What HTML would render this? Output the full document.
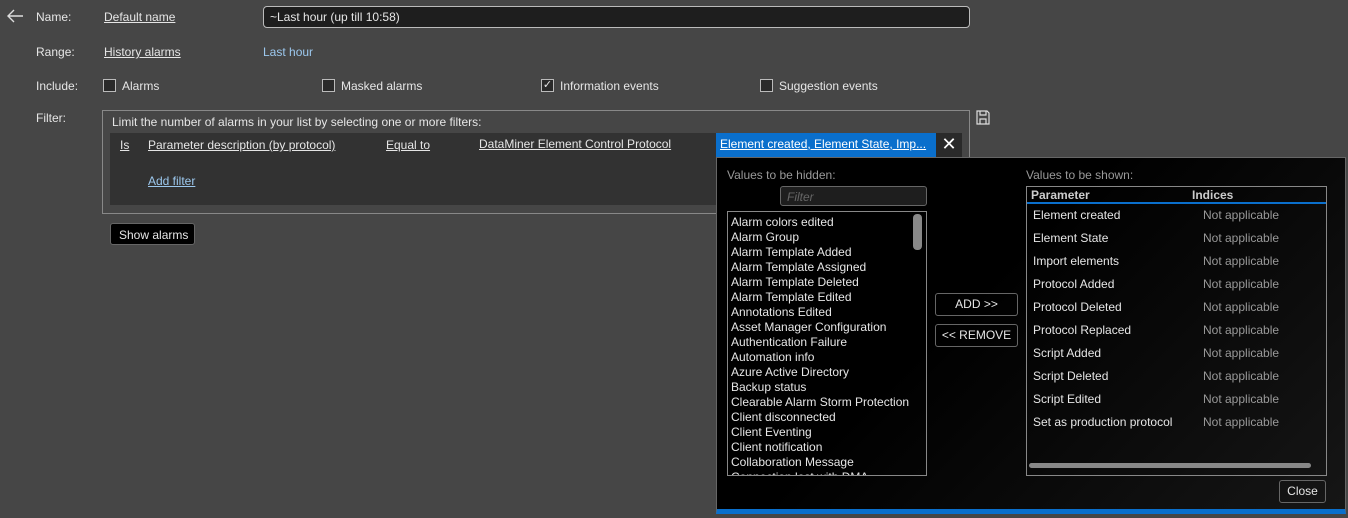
<!DOCTYPE html>
<html><head><style>
*{box-sizing:border-box;margin:0;padding:0}
body{width:1348px;height:518px;background:#464646;font-family:"Liberation Sans",sans-serif;font-size:12px;color:#e6e6e6;position:relative;overflow:hidden}
.a{position:absolute;white-space:nowrap}
.u{text-decoration:underline}
.cb{position:absolute;width:13px;height:13px;border:1px solid #bbb;background:#2a2a2a}
.lst div{height:15px;line-height:15px;padding-left:3px}
</style></head><body>
<svg class="a" style="left:6px;top:9px" width="18" height="14"><path d="M17 7H2M8 1L2 7l6 6" stroke="#ddd" stroke-width="1.4" fill="none"/></svg>
<div class="a" style="left:36px;top:10px">Name:</div>
<div class="a u" style="left:104px;top:10px">Default name</div>
<div class="a" style="left:263px;top:6px;width:707px;height:22px;border:1px solid #bbb;border-radius:4px;background:#1e1e1e;padding:3px 6px">~Last hour (up till 10:58)</div>
<div class="a" style="left:36px;top:45px">Range:</div>
<div class="a u" style="left:104px;top:45px">History alarms</div>
<div class="a" style="left:263px;top:45px;color:#9cc8ee">Last hour</div>
<div class="a" style="left:36px;top:79px">Include:</div>
<div class="cb" style="left:103px;top:79px"></div><div class="a" style="left:122px;top:79px">Alarms</div>
<div class="cb" style="left:322px;top:79px"></div><div class="a" style="left:341px;top:79px">Masked alarms</div>
<div class="cb" style="left:541px;top:79px;font-size:11px;line-height:11px;text-align:center">✓</div><div class="a" style="left:560px;top:79px">Information events</div>
<div class="cb" style="left:760px;top:79px"></div><div class="a" style="left:779px;top:79px">Suggestion events</div>
<div class="a" style="left:36px;top:111px">Filter:</div>
<div class="a" style="left:102px;top:110px;width:868px;height:104px;border:1px solid #888"></div>
<div class="a" style="left:112px;top:115px">Limit the number of alarms in your list by selecting one or more filters:</div>
<div class="a" style="left:110px;top:133px;width:852px;height:72px;background:#323232"></div>
<div class="a u" style="left:120px;top:138px">Is</div>
<div class="a u" style="left:148px;top:138px">Parameter description (by protocol)</div>
<div class="a u" style="left:386px;top:138px">Equal to</div>
<div class="a u" style="left:479px;top:137px">DataMiner Element Control Protocol</div>
<div class="a u" style="left:148px;top:174px;color:#9cc8ee">Add filter</div>
<svg class="a" style="left:976px;top:110px" width="14" height="15"><path d="M1 1h10l2 2v11H1z M4 1v4h6V1 M4 14V9h6v5" stroke="#ddd" stroke-width="1.2" fill="none"/></svg>
<div class="a" style="left:110px;top:223px;width:85px;height:22px;background:#000;border:1px solid #666;border-radius:3px;padding:4px 8px">Show alarms</div>
<div class="a u" style="left:716px;top:133px;width:220px;height:24px;background:#0a6fcc;padding:4px 4px;color:#fff;overflow:hidden">Element created, Element State, Imp...</div>
<div class="a" style="left:936px;top:133px;width:26px;height:24px;background:#2a2a2a;text-align:center;font-size:18px;line-height:23px;color:#fff">✕</div>
<div class="a" style="left:716px;top:157px;width:630px;height:357px;background:linear-gradient(135deg,#000 40%,#161616);border:1px solid #666;border-bottom:5px solid #0a6fcc"></div>
<div class="a" style="left:727px;top:168px;color:#999">Values to be hidden:</div>
<div class="a" style="left:780px;top:186px;width:147px;height:20px;border:1px solid #666;border-radius:3px;background:#1e1e1e;padding:3px 6px;color:#666;font-style:italic">Filter</div>
<div class="a lst" style="left:727px;top:211px;width:200px;height:265px;border:1px solid #888;overflow:hidden;padding-top:3px">
<div>Alarm colors edited</div><div>Alarm Group</div><div>Alarm Template Added</div><div>Alarm Template Assigned</div><div>Alarm Template Deleted</div><div>Alarm Template Edited</div><div>Annotations Edited</div><div>Asset Manager Configuration</div><div>Authentication Failure</div><div>Automation info</div><div>Azure Active Directory</div><div>Backup status</div><div>Clearable Alarm Storm Protection</div><div>Client disconnected</div><div>Client Eventing</div><div>Client notification</div><div>Collaboration Message</div><div>Connection lost with DMA</div>
</div>
<div class="a" style="left:913px;top:214px;width:9px;height:36px;background:#888;border-radius:4px"></div>
<div class="a" style="left:935px;top:293px;width:83px;height:23px;border:1px solid #666;border-radius:3px;text-align:center;line-height:21px">ADD &gt;&gt;</div>
<div class="a" style="left:935px;top:324px;width:83px;height:23px;border:1px solid #666;border-radius:3px;text-align:center;line-height:21px">&lt;&lt; REMOVE</div>
<div class="a" style="left:1026px;top:168px;color:#999">Values to be shown:</div>
<div class="a" style="left:1026px;top:186px;width:301px;height:290px;border:1px solid #888">
<div class="a" style="left:4px;top:1px;font-weight:bold;color:#ccc">Parameter</div>
<div class="a" style="left:165px;top:1px;font-weight:bold;color:#ccc">Indices</div>
<div class="a" style="left:0;top:15px;width:299px;height:2px;background:#0a6fcc"></div>
<div class="a" style="left:2px;top:276px;width:282px;height:5px;background:#888;border-radius:3px"></div>
</div>
<div class="a" style="left:1033px;top:204px;line-height:23px">Element created<br>Element State<br>Import elements<br>Protocol Added<br>Protocol Deleted<br>Protocol Replaced<br>Script Added<br>Script Deleted<br>Script Edited<br>Set as production protocol</div>
<div class="a" style="left:1203px;top:204px;line-height:23px;color:#999">Not applicable<br>Not applicable<br>Not applicable<br>Not applicable<br>Not applicable<br>Not applicable<br>Not applicable<br>Not applicable<br>Not applicable<br>Not applicable</div>
<div class="a" style="left:1279px;top:480px;width:47px;height:23px;border:1px solid #666;border-radius:3px;text-align:center;line-height:21px">Close</div>
</body></html>
